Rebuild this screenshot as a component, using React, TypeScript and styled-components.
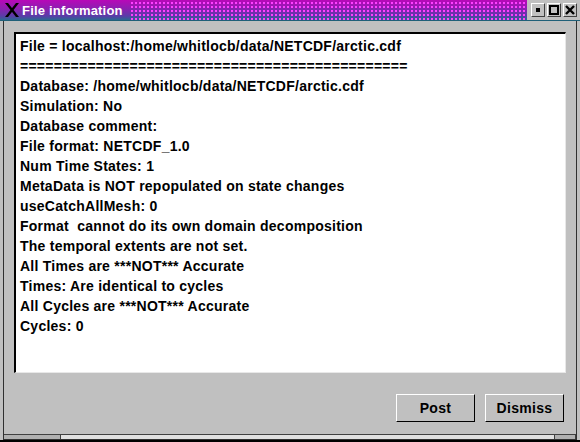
import React from "react";
import styled, { createGlobalStyle } from "styled-components";

const Global = createGlobalStyle`
  html, body { margin: 0; padding: 0; background: #c0c0c0; }
  body { width: 580px; height: 442px; overflow: hidden; }
`;

const Window = styled.div`
  width: 580px;
  height: 442px;
  box-sizing: border-box;
  display: flex;
  flex-direction: column;
  background: #c0c0c0;
  font-family: "Liberation Sans", Arial, sans-serif;
  border-bottom: 2px solid #000;
`;

const TitleBar = styled.div`
  height: 20px;
  display: flex;
  align-items: center;
  background: linear-gradient(#b808b8 0%, #8a20b0 45%, #5a3ca8 80%, #2a6890 100%);
  border-bottom: 1px solid #1f5f78;
`;

const TitleIcon = styled.svg`
  width: 16px;
  height: 16px;
  margin-left: 4px;
  flex: none;
`;

const TitleText = styled.div`
  color: #fff;
  font-weight: bold;
  font-size: 13px;
  margin-left: 2px;
  padding-right: 6px;
  letter-spacing: 0.2px;
`;

const Dots = styled.div`
  flex: 1;
  align-self: stretch;
  background-image: radial-gradient(circle, #ff40ff 0.8px, transparent 1px);
  background-size: 4px 4px;
  background-position: 1px 1px;
`;

const WinButtons = styled.div`
  display: flex;
  align-items: center;
  gap: 2px;
  padding: 0 3px 0 4px;
  align-self: stretch;
  background: #c0c0c0;
`;

const WinButton = styled.div`
  width: 14px;
  height: 14px;
  box-sizing: border-box;
  border: 1px solid;
  border-color: #fff #404040 #404040 #fff;
  background: #c0c0c0;
  display: flex;
  align-items: center;
  justify-content: center;
`;

const Frame = styled.div`
  flex: 1;
  display: flex;
  flex-direction: column;
  margin: 0 3px 0 3px;
  border-left: 1px solid #303030;
  border-right: 1px solid #303030;
  border-bottom: 1px solid #303030;
`;

const Body = styled.div`
  flex: 1;
  display: flex;
  flex-direction: column;
  padding: 11px 10px 0 10px;
`;

const TextArea = styled.div`
  height: 341px;
  box-sizing: border-box;
  background: #fff;
  border-style: solid;
  border-width: 2px 1px 1px 2px;
  border-color: #000 #e8e8e8 #e8e8e8 #000;
  padding: 2px 0 0 4px;
  overflow: hidden;
`;

const Line = styled.div`
  font-size: 14px;
  font-weight: bold;
  letter-spacing: 0.25px;
  line-height: 20px;
  color: #000;
  white-space: pre;
`;

const ButtonRow = styled.div`
  display: flex;
  justify-content: flex-end;
  gap: 10px;
  margin-top: 21px;
  padding-right: 2px;
`;

const Button = styled.div`
  width: 79px;
  height: 28px;
  box-sizing: border-box;
  border: 1px solid;
  border-color: #fff #000 #000 #fff;
  display: flex;
  align-items: center;
  justify-content: center;
  font-size: 14px;
  font-weight: bold;
  letter-spacing: 0.3px;
  color: #000;
`;

const BottomStrip = styled.div`
  margin-top: auto;
  height: 4px;
  display: flex;
  border-top: 1px solid #404040;
`;

const StripCell = styled.div<{ $w?: number; $light?: boolean }>`
  ${(p) => (p.$w ? `width: ${p.$w}px;` : "flex: 1;")}
  background: ${(p) => (p.$light ? "#e0e0e0" : "#b0b0b0")};
  border-right: 1px solid #404040;
`;

const lines = [
  "File = localhost:/home/whitlocb/data/NETCDF/arctic.cdf",
  "==============================================",
  "Database: /home/whitlocb/data/NETCDF/arctic.cdf",
  "Simulation: No",
  "Database comment:",
  "File format: NETCDF_1.0",
  "Num Time States: 1",
  "MetaData is NOT repopulated on state changes",
  "useCatchAllMesh: 0",
  "Format  cannot do its own domain decomposition",
  "The temporal extents are not set.",
  "All Times are ***NOT*** Accurate",
  "Times: Are identical to cycles",
  "All Cycles are ***NOT*** Accurate",
  "Cycles: 0",
];

export default function App() {
  return (
    <>
      <Global />
      <Window>
        <TitleBar>
          <TitleIcon viewBox="0 0 16 16">
            <path d="M1 1 L4 1 L15 15 L12 15 Z" fill="#000" />
            <path d="M12 1 L15 1 L4 15 L1 15 Z" fill="#000" />
          </TitleIcon>
          <TitleText>File information</TitleText>
          <Dots />
          <WinButtons>
            <WinButton>
              <svg width="6" height="6" viewBox="0 0 6 6">
                <rect x="1" y="1" width="4" height="4" fill="#000" />
              </svg>
            </WinButton>
            <WinButton>
              <svg width="10" height="10" viewBox="0 0 10 10">
                <rect x="1" y="1" width="8" height="8" fill="none" stroke="#000" strokeWidth="2" />
              </svg>
            </WinButton>
            <WinButton>
              <svg width="10" height="10" viewBox="0 0 10 10">
                <path d="M1 1 L9 9 M9 1 L1 9" stroke="#000" strokeWidth="2.4" />
              </svg>
            </WinButton>
          </WinButtons>
        </TitleBar>
        <Frame>
          <Body>
            <TextArea>
              {lines.map((l, i) => (
                <Line key={i}>{l}</Line>
              ))}
            </TextArea>
            <ButtonRow>
              <Button>Post</Button>
              <Button>Dismiss</Button>
            </ButtonRow>
          </Body>
          <BottomStrip>
            <StripCell $w={56} />
            <StripCell $light />
            <StripCell $w={20} />
          </BottomStrip>
        </Frame>
      </Window>
    </>
  );
}
